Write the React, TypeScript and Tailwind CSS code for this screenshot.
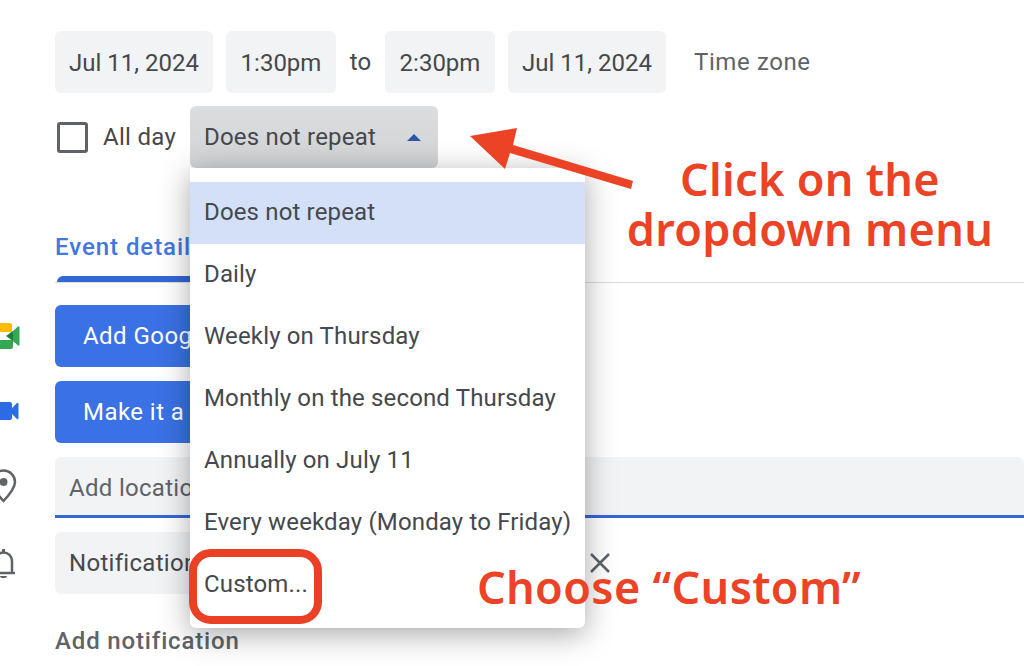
import React from "react";

const Chip = ({ w, children }: { w: string; children: React.ReactNode }) => (
  <div className={`${w} h-[62px] shrink-0 rounded-md bg-[#f1f3f4] flex items-center justify-center pt-[1px]`}>{children}</div>
);

const items = [
  "Does not repeat",
  "Daily",
  "Weekly on Thursday",
  "Monthly on the second Thursday",
  "Annually on July 11",
  "Every weekday (Monday to Friday)",
  "Custom...",
];

function Meet() {
  return (
    <svg width="20" height="28" viewBox="0 0 20 28" className="absolute left-0 top-[323px]">
      <path d="M0 0h10a2 2 0 0 1 2 2v7H0z" fill="#fbbc04" />
      <path d="M0 17h13v7a2 2 0 0 1-2 2H0z" fill="#34a853" />
      <path d="M0 9h6v8H0z" fill="#fff" />
      <path d="M6 9h6v8H6z" fill="#fff" />
      <path d="M6 13l7-5v10z" fill="#188038" />
      <path d="M13 8l5-4.500a1 1 0 0 1 1.500 1v17a1 1 0 0 1-1.500 1L13 18z" fill="#34a853" />
    </svg>
  );
}

export default function App() {
  return (
    <div className="relative w-[1024px] h-[666px] overflow-hidden bg-white text-[#45484c] text-[24px] font-['Roboto',sans-serif]">
      <div className="flex flex-col pt-[31px] pl-[55px]">
        <div className="flex items-center">
          <Chip w="w-[158px]">Jul 11, 2024</Chip>
          <div className="w-[13px]" />
          <Chip w="w-[110px]">1:30pm</Chip>
          <div className="w-[49px] text-center">to</div>
          <Chip w="w-[110px]">2:30pm</Chip>
          <div className="w-[13px]" />
          <Chip w="w-[158px]">Jul 11, 2024</Chip>
          <div className="ml-[28px] text-[#5f6368] tracking-[0.6px]">Time zone</div>
        </div>
        <div className="flex items-center mt-[13px]">
          <div className="ml-[2px] w-[31px] h-[31px] rounded-[3px] border-[3px] border-[#5f6368]" />
          <div className="ml-[15px] w-[87px] tracking-[0.3px]">All day</div>
          <div className="w-[248px] h-[62px] rounded-md bg-gradient-to-b from-[#dcdddf] to-[#d2d3d5] flex items-center justify-between pl-[14px] pr-[17px]">
            <span className="tracking-[0.2px]">Does not repeat</span>
            <span className="w-0 h-0 border-x-[7px] border-x-transparent border-b-[7px] border-b-[#2f55a4]" />
          </div>
        </div>
        <div className="h-[50px] mt-[65px] flex flex-col justify-between border-b border-[#dadce0]">
          <div className="font-medium text-[#4277e0] leading-[28px] tracking-[0.95px]">Event details</div>
          <div className="h-[6px] w-[200px] ml-[2px] rounded-t-md bg-[#3367d6]" />
        </div>
        <div className="h-[62px] w-[300px] mt-[22px] rounded-md bg-[#3a71e4] text-white tracking-[0.45px] flex items-center pl-[28px]">Add Google Meet</div>
        <div className="h-[62px] w-[300px] mt-[14px] rounded-md bg-[#3a71e4] text-white tracking-[0.45px] flex items-center pl-[28px]">Make it a Zoom</div>
        <div className="h-[61px] mt-[14px] pt-[3px] rounded-t-md bg-[#f1f3f4] border-b-[3px] border-[#3367d6] flex items-center pl-[14px] text-[#5f6368] tracking-[0.3px]">Add location</div>
        <div className="h-[62px] w-[400px] mt-[14px] rounded-md bg-[#f1f3f4] flex items-center pl-[14px] tracking-[0.3px]">Notification</div>
        <div className="mt-[29px] text-[#5f6368] font-medium tracking-[0.85px]">Add notification</div>
      </div>

      <Meet />
      <svg width="20" height="20" viewBox="0 0 20 20" className="absolute left-0 top-[401px]">
        <path d="M-4 1h14a2 2 0 0 1 2 2v4l5-5a1 1 0 0 1 1.500 1v14a1 1 0 0 1-1.500 1l-5-5v4a2 2 0 0 1-2 2H-4z" fill="#2d6be4" />
      </svg>
      <svg width="18" height="38" viewBox="0 0 18 38" className="absolute left-0 top-[468px]">
        <path d="M3.500 33C-3 26-8 20-8 14A11.500 11.500 0 0 1 15 14C15 20 10 26 3.500 33z" fill="none" stroke="#5f6368" strokeWidth="2.500" />
        <circle cx="3.500" cy="14" r="4" fill="#5f6368" />
      </svg>
      <svg width="18" height="32" viewBox="0 0 18 32" className="absolute left-0 top-[548px]">
        <path d="M-6 25h21M12 25V13a8.500 8.500 0 0 0-17 0v12" fill="none" stroke="#5f6368" strokeWidth="2.500" />
        <path d="M2 1h3v4H2zM0 28h7a3.500 2 0 0 1-7 0z" fill="#5f6368" />
      </svg>
      <svg width="24" height="24" viewBox="0 0 24 24" className="absolute left-[588px] top-[551px]">
        <path d="M3 3l18 18M21 3L3 21" stroke="#5f6368" strokeWidth="2.500" />
      </svg>

      <div className="absolute left-[190px] top-[168px] w-[395px] h-[460px] pt-[14px] bg-white rounded-b-md shadow-[0_6px_30px_rgba(0,0,0,0.35)]">
        {items.map((t, i) => (
          <div key={t} className={`h-[62px] flex items-center pl-[14px] pb-[2px] tracking-[0.15px] ${i === 0 ? "bg-[#d3e0f7]" : ""}`}>{t}</div>
        ))}
      </div>

      <div className="absolute left-[189px] top-[549px] w-[133px] h-[75px] rounded-[22px] border-[8px] border-[#ea4025]" />

      <svg width="1024" height="666" viewBox="0 0 1024 666" className="absolute left-0 top-0 pointer-events-none">
        <path d="M470 136L517 128L513 145L633 181L631 189L510 153L505 169z" fill="#ec4226" />
      </svg>
      <div className="absolute left-[610px] top-[154px] w-[400px] text-center text-[#ec4226] font-semibold text-[45px] leading-[50px] tracking-[0.3px] font-['Noto_Sans',sans-serif] whitespace-nowrap">
        Click on the<br />dropdown menu
      </div>
      <div className="absolute left-[477px] top-[561px] text-[#ec4226] font-semibold text-[45px] leading-[51px] tracking-[0.35px] font-['Noto_Sans',sans-serif] whitespace-nowrap">
        Choose “Custom”
      </div>
    </div>
  );
}
